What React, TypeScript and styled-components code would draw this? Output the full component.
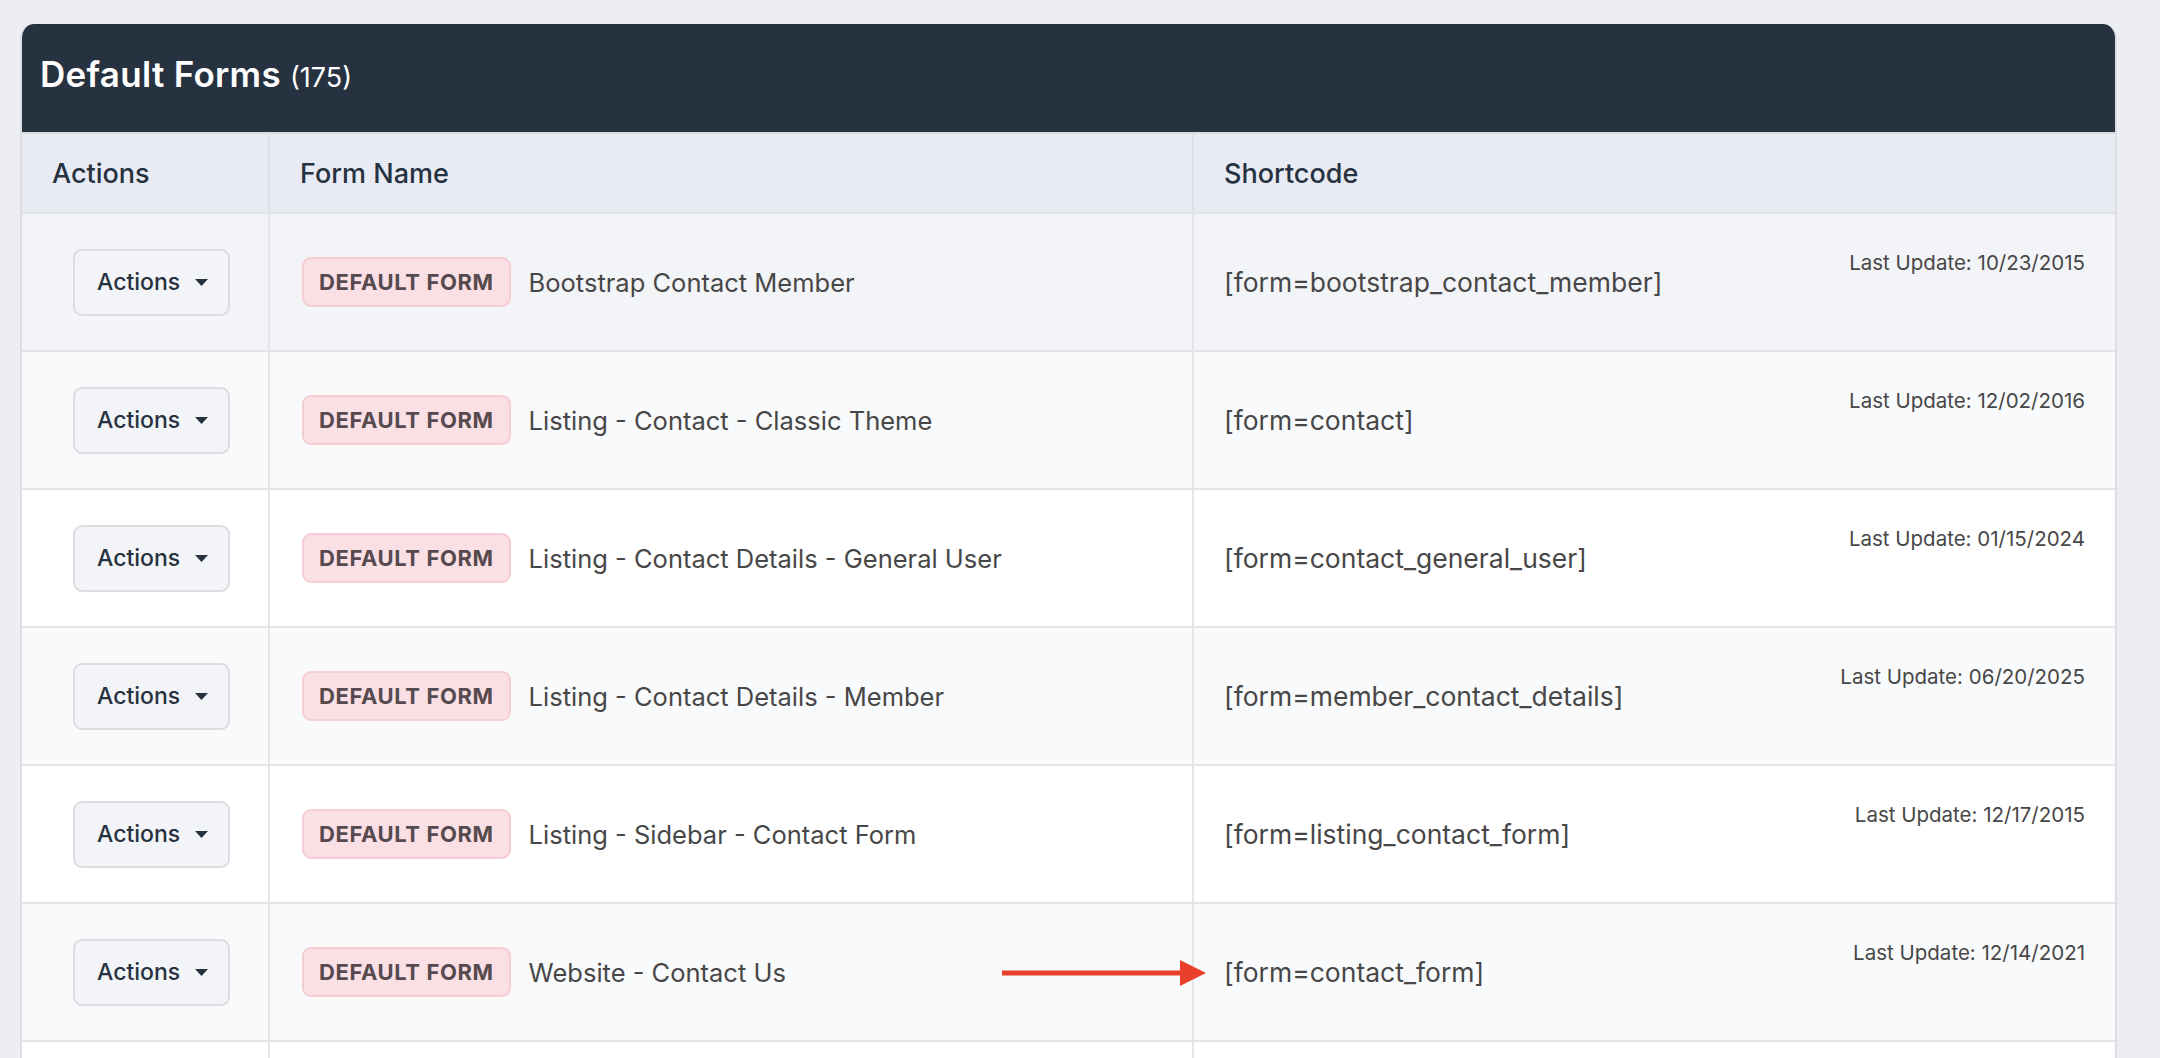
import styled, { createGlobalStyle } from "styled-components";

interface FormRow {
    name: string;
    shortcode: string;
    updated: string;
}

const rows: FormRow[] = [
    { name: "Bootstrap Contact Member", shortcode: "[form=bootstrap_contact_member]", updated: "10/23/2015" },
    { name: "Listing - Contact - Classic Theme", shortcode: "[form=contact]", updated: "12/02/2016" },
    { name: "Listing - Contact Details - General User", shortcode: "[form=contact_general_user]", updated: "01/15/2024" },
    { name: "Listing - Contact Details - Member", shortcode: "[form=member_contact_details]", updated: "06/20/2025" },
    { name: "Listing - Sidebar - Contact Form", shortcode: "[form=listing_contact_form]", updated: "12/17/2015" },
    { name: "Website - Contact Us", shortcode: "[form=contact_form]", updated: "12/14/2021" },
];

function App() {
    return (
        <>
            <GlobalStyle />
            <Page>
                <Card>
                    <CardHeader>
                        <Title>Default Forms</Title>
                        <Count>(175)</Count>
                    </CardHeader>
                    <HeadRow>
                        <HeadCell>Actions</HeadCell>
                        <HeadCell $divider>Form Name</HeadCell>
                        <HeadCell $divider>Shortcode</HeadCell>
                    </HeadRow>
                    {rows.map((row, i) => (
                        <Row key={row.shortcode} $tone={i === 0 ? "hover" : i % 2 === 1 ? "stripe" : "plain"}>
                            <ActionCell>
                                <ActionButton>
                                    Actions
                                    <svg width="13" height="7" viewBox="0 0 13 7">
                                        <path d="M0 0 H13 L6.5 7 Z" fill="#263240" />
                                    </svg>
                                </ActionButton>
                            </ActionCell>
                            <NameCell>
                                <Badge>DEFAULT FORM</Badge>
                                <FormName>{row.name}</FormName>
                            </NameCell>
                            <CodeCell>
                                <Shortcode>{row.shortcode}</Shortcode>
                                <Updated>Last Update: {row.updated}</Updated>
                            </CodeCell>
                            {row.shortcode === "[form=contact_form]" && (
                                <Arrow width="204" height="26" viewBox="0 0 204 26">
                                    <rect x="0" y="10.5" width="182" height="5" fill="#e8402a" />
                                    <path d="M178 0 L204 13 L178 26 Z" fill="#e8402a" />
                                </Arrow>
                            )}
                        </Row>
                    ))}
                    {/* next row starts just above the fold */}
                    <Row $tone="plain">
                        <ActionCell />
                        <NameCell />
                        <CodeCell />
                    </Row>
                </Card>
            </Page>
        </>
    );
}

export default App;

const GlobalStyle = createGlobalStyle`
  html, body {
    margin: 0;
    background: #eceef3;
    font-family: Inter, "Noto Sans", sans-serif;
  }
`;

const Page = styled.div`
  padding: 24px 43px 0 20px;
`;

const Card = styled.div`
  background: #fff;
  border: 2px solid #dcdee2;
  border-top: none;
  border-radius: 14px 14px 0 0;
  overflow: hidden;
`;

const CardHeader = styled.div`
  height: 108px;
  background: #263240;
  display: flex;
  align-items: center;
  gap: 9px;
  padding: 0 20px 8px;
  box-sizing: border-box;
  color: #fff;
  margin: 0 -2px;
`;

const Title = styled.h2`
  margin: 0;
  font-size: 35px;
  font-weight: 600;
  letter-spacing: 0.3px;
`;

const Count = styled.span`
  font-size: 27px;
  font-weight: 400;
  margin-top: 7px;
`;

const columns = "246px 924px 1fr";

const HeadRow = styled.div`
  display: grid;
  grid-template-columns: ${columns};
  height: 80px;
  background: #e8ebf3;
  border-top: 2px solid #d9dbdf;
  box-sizing: border-box;
`;

const HeadCell = styled.div<{ $divider?: boolean }>`
  display: flex;
  align-items: center;
  padding: 0 30px;
  font-size: 27px;
  font-weight: 500;
  color: #263240;
  border-left: ${(p) => (p.$divider ? "2px solid #dfe0e4" : "none")};
`;

const tones = {
    hover: "#f3f4f8",
    stripe: "#f9fafc",
    plain: "#ffffff",
};

const Row = styled.div<{ $tone: keyof typeof tones }>`
  position: relative;
  display: grid;
  grid-template-columns: ${columns};
  height: 138px;
  box-sizing: border-box;
  border-top: 2px solid #e3e4e7;
  background: ${(p) => tones[p.$tone]};

  &:nth-of-type(2) {
    border-top: none;
  }
`;

const ActionCell = styled.div`
  display: flex;
  align-items: center;
  padding-left: 51px;
`;

const ActionButton = styled.button`
  display: flex;
  align-items: center;
  gap: 15px;
  width: 157px;
  height: 67px;
  padding: 0 0 0 22px;
  background: #f3f4f7;
  border: 2px solid #dcdde0;
  border-radius: 9px;
  font-family: inherit;
  font-size: 23px;
  font-weight: 500;
  color: #263240;
  cursor: pointer;
`;

const NameCell = styled.div`
  display: flex;
  align-items: center;
  gap: 18px;
  padding-left: 32px;
  border-left: 2px solid #e4e5e8;
`;

const Badge = styled.span`
  display: inline-flex;
  align-items: center;
  height: 50px;
  box-sizing: border-box;
  padding: 0 15px;
  background: #fae0e4;
  border: 2px solid #f6cdd3;
  border-radius: 9px;
  font-size: 22px;
  font-weight: 700;
  color: #574a4e;
  letter-spacing: 0.6px;
`;

const FormName = styled.span`
  font-size: 25.5px;
  color: #474747;
`;

const CodeCell = styled.div`
  display: flex;
  align-items: center;
  justify-content: space-between;
  padding: 0 30px 0 30px;
  border-left: 2px solid #e4e5e8;
`;

const Shortcode = styled.span`
  font-size: 26.5px;
  color: #474747;
`;

const Updated = styled.span`
  align-self: flex-start;
  margin-top: 36px;
  font-size: 20.5px;
  color: #474747;
`;

const Arrow = styled.svg`
  position: absolute;
  left: 980px;
  top: 56px;
`;
